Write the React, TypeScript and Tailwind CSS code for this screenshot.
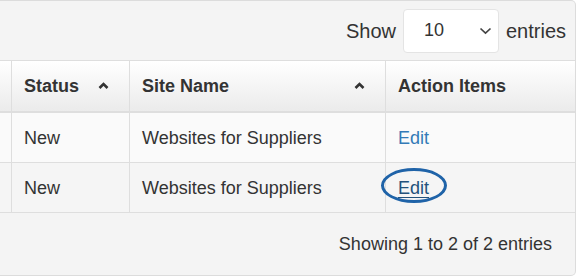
import React from "react";

const cols = "grid grid-cols-[11px_118px_256px_1fr]";

function SortUp() {
  return (
    <svg width="11" height="8" viewBox="0 0 11 8" className="shrink-0">
      <path d="M1.5 6 L5.5 2 L9.5 6" fill="none" stroke="#333" strokeWidth="2.6" />
    </svg>
  );
}

function Chevron() {
  return (
    <svg width="13" height="8" viewBox="0 0 13 8">
      <path d="M1.5 1.5 L6.5 6.2 L11.5 1.5" fill="none" stroke="#444" strokeWidth="1.7" />
    </svg>
  );
}

const rows = [
  { status: "New", site: "Websites for Suppliers", bg: "bg-[#fafafa]", circled: false },
  { status: "New", site: "Websites for Suppliers", bg: "bg-[#f5f5f5]", circled: true },
];

export default function App() {
  return (
    <div
      className="w-[577px] h-[276px] bg-white overflow-hidden text-[18px] text-[#333]"
      style={{ fontFamily: '"Liberation Sans", Arial, sans-serif' }}
    >
      <div className="w-[576px] h-[276px] bg-[#f4f4f4] border border-l-0 border-[#dcdcdc] rounded-r-[5px] flex flex-col">
        <div className="h-[59px] flex items-center justify-end pr-[9px]">
          <span className="text-[20px] mr-[7px]">Show</span>
          <div className="w-[96px] h-[44px] bg-white rounded-[4px] border border-[#e4e4e4] flex items-center justify-between pl-[20px] pr-[6px]">
            <span className="text-[18px]">10</span>
            <Chevron />
          </div>
          <span className="text-[20px] ml-[7px]">entries</span>
        </div>

        <div className={`${cols} h-[53px] border-t border-b-2 border-[#dedede] bg-gradient-to-b from-white to-[#ebebeb] font-bold`}>
          <div />
          <div className="border-l border-[#dedede] flex items-center justify-between pl-[12px] pr-[20px]">
            <span>Status</span>
            <SortUp />
          </div>
          <div className="border-l border-[#dedede] flex items-center justify-between pl-[12px] pr-[20px]">
            <span>Site Name</span>
            <SortUp />
          </div>
          <div className="border-l border-[#dedede] flex items-center pl-[12px]">
            <span>Action Items</span>
          </div>
        </div>

        {rows.map((r, i) => (
          <div key={i} className={`${cols} h-[50px] border-b border-[#dedede] ${r.bg}`}>
            <div />
            <div className="border-l border-[#dedede] flex items-center pl-[12px] pt-[2px]">{r.status}</div>
            <div className="border-l border-[#dedede] flex items-center pl-[12px] pt-[2px]">{r.site}</div>
            <div className="border-l border-[#dedede] flex items-center pl-[12px] pt-[2px]">
              {r.circled ? (
                <span className="relative text-[#23527c] underline underline-offset-[3px]">
                  Edit
                  <span className="absolute left-[-17px] top-[-7px] w-[66px] h-[35px] rounded-[50%] border-[3px] border-[#1f63a8]" />
                </span>
              ) : (
                <span className="text-[#337ab7]">Edit</span>
              )}
            </div>
          </div>
        ))}

        <div className="flex-1 flex items-center justify-end pr-[23px]">
          <span>Showing 1 to 2 of 2 entries</span>
        </div>
      </div>
    </div>
  );
}
